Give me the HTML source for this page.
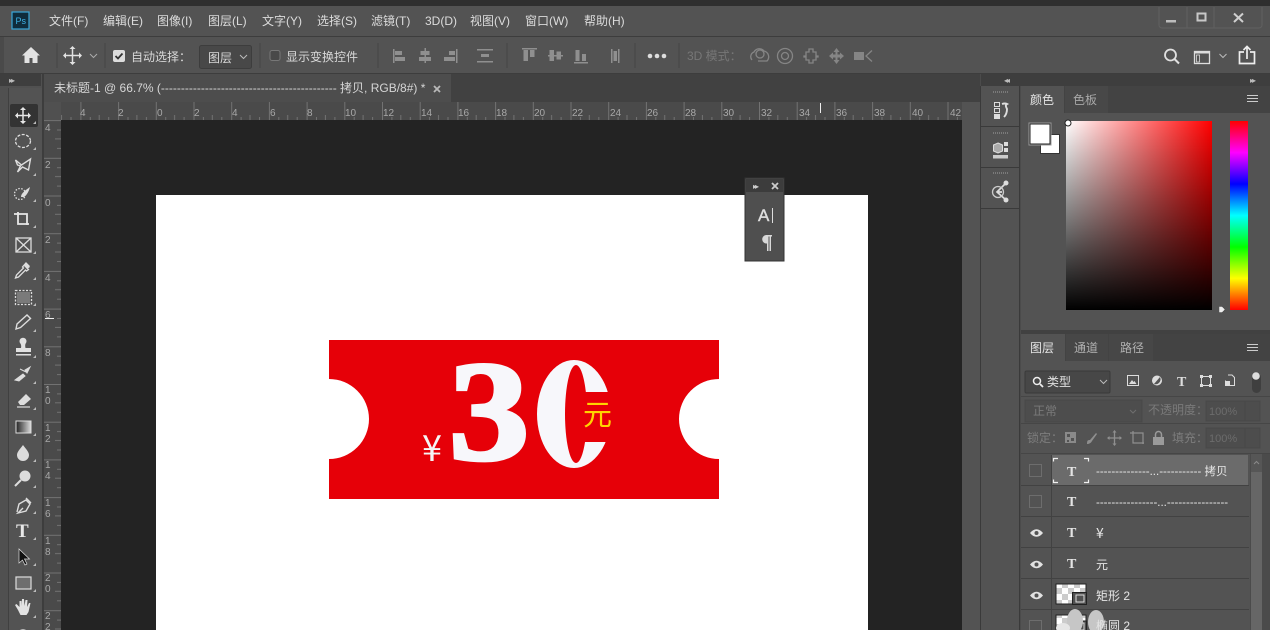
<!DOCTYPE html>
<html lang="zh"><head><meta charset="utf-8"><title>Photoshop</title>
<style>
html,body{margin:0;padding:0;background:#535353;width:1270px;height:630px;overflow:hidden}
svg{display:block;position:absolute;left:0;top:0}
text{font-family:"Liberation Sans","Noto Sans CJK SC",sans-serif;font-size:12px;fill:#d6d6d6}
.m text{font-size:12px;fill:#dcdcdc}
.r text{font-size:10px;fill:#a8a8a8}
.i{fill:none;stroke:#e2e2e2;stroke-width:1.5}
.f{fill:#e2e2e2;stroke:none}
.sep{stroke:#464646;stroke-width:1}
.big{font-family:"Liberation Serif",serif;font-weight:bold;font-size:142px;fill:#f7f7fb;stroke:#f7f7fb;stroke-width:4}
</style></head><body>
<svg width="1270" height="630" viewBox="0 0 1270 630" xmlns="http://www.w3.org/2000/svg">
<defs>
<linearGradient id="wr" x1="0" x2="1" y1="0" y2="0"><stop offset="0" stop-color="#fff"/><stop offset="1" stop-color="#f00"/></linearGradient>
<linearGradient id="bk" x1="0" x2="0" y1="0" y2="1"><stop offset="0" stop-color="#000" stop-opacity="0"/><stop offset="1" stop-color="#000"/></linearGradient>
<linearGradient id="hue" x1="0" x2="0" y1="0" y2="1"><stop offset="0" stop-color="#f00"/><stop offset=".167" stop-color="#f0f"/><stop offset=".333" stop-color="#00f"/><stop offset=".5" stop-color="#0ff"/><stop offset=".667" stop-color="#0f0"/><stop offset=".833" stop-color="#ff0"/><stop offset="1" stop-color="#f00"/></linearGradient>
<linearGradient id="gt" x1="0" x2="1" y1="0" y2="0"><stop offset="0" stop-color="#222"/><stop offset="1" stop-color="#ddd"/></linearGradient>
<pattern id="hr" width="37.7" height="18" patternUnits="userSpaceOnUse" x="5" y="102">
<g stroke="#727272" stroke-width="1"><line x1=".5" y1="0" x2=".5" y2="18"/><line x1="9.9" y1="15" x2="9.9" y2="18"/><line x1="18.8" y1="13" x2="18.8" y2="18"/><line x1="28.3" y1="15" x2="28.3" y2="18"/></g></pattern>
<pattern id="vr" width="17" height="37.7" patternUnits="userSpaceOnUse" x="44" y="7">
<g stroke="#727272" stroke-width="1"><line x1="0" y1=".5" x2="17" y2=".5"/><line x1="13" y1="9.9" x2="17" y2="9.9"/><line x1="11" y1="18.8" x2="17" y2="18.8"/><line x1="13" y1="28.3" x2="17" y2="28.3"/></g></pattern>
<pattern id="ck" width="12" height="12" patternUnits="userSpaceOnUse"><rect width="12" height="12" fill="#fff"/><rect width="6" height="6" fill="#ccc"/><rect x="6" y="6" width="6" height="6" fill="#ccc"/></pattern>
</defs>

<!-- chrome bands -->
<rect width="1270" height="630" fill="#535353"/>
<rect width="1270" height="6" fill="#2f2f2f"/>
<rect y="36" width="1270" height="1" fill="#3d3d3d"/>
<rect y="73" width="1270" height="1" fill="#3d3d3d"/>
<rect x="0" y="37" width="4" height="36" fill="#4a4a4a"/>

<!-- title / menu -->
<rect x="12" y="12" width="17" height="17" fill="#0f2c3c" stroke="#3aa6d8" stroke-width="1.2"/>
<text x="15.500" y="24" style="font-size:9px;fill:#3fb3e8">Ps</text>
<g class="m">
<text x="49" y="25">文件(F)</text><text x="103" y="25">编辑(E)</text><text x="157" y="25">图像(I)</text><text x="208" y="25">图层(L)</text><text x="262" y="25">文字(Y)</text><text x="317" y="25">选择(S)</text><text x="371" y="25">滤镜(T)</text><text x="425" y="25">3D(D)</text><text x="470" y="25">视图(V)</text><text x="525" y="25">窗口(W)</text><text x="584" y="25">帮助(H)</text>
</g>
<!-- window buttons -->
<path d="M1159 7V25a3 3 0 0 0 3 3H1259a3 3 0 0 0 3-3V7M1187 7V28M1214 7V28" fill="none" stroke="#606060"/>
<rect x="1166" y="20" width="10" height="2.500" fill="#bdbdbd"/>
<rect x="1197.500" y="13.500" width="8" height="7" fill="none" stroke="#c8c8c8" stroke-width="2"/>
<path d="M1234 13.500L1243 22M1243 13.500L1234 22" stroke="#d0d0d0" stroke-width="2"/>

<!-- options bar -->
<path d="M31 47l-9 8.500h2.500v7.500h5v-5h3v5h5v-7.500h2.500z" class="f"/>
<line x1="57" y1="43" x2="57" y2="68" class="sep"/><line x1="105" y1="43" x2="105" y2="68" class="sep"/>
<line x1="260" y1="43" x2="260" y2="68" class="sep"/><line x1="378" y1="43" x2="378" y2="68" class="sep"/><line x1="507" y1="43" x2="507" y2="68" class="sep"/><line x1="635" y1="43" x2="635" y2="68" class="sep"/><line x1="679" y1="43" x2="679" y2="68" class="sep"/>
<g>
<path d="M72.500 48v15M65 55.500h15" class="i"/><path d="M72.500 46l-3 3h6zM72.500 65l-3-3h6zM63 55.500l3-3v6zM82 55.500l-3-3v6z" class="f"/>
</g>
<path d="M90 54l3.500 3.500 3.500-3.500" fill="none" stroke="#aaa"/>
<rect x="113" y="50" width="12" height="12" rx="2" fill="#ddd"/><path d="M115.500 56l2.500 2.500 4.500-5" fill="none" stroke="#333" stroke-width="1.800"/>
<text x="131" y="61" style="fill:#d8d8d8">自动选择：</text>
<rect x="199.500" y="45.500" width="52" height="23" rx="2" fill="#484848" stroke="#3d3d3d"/>
<text x="208" y="62" style="fill:#d8d8d8">图层</text><path d="M240 55l3.500 3.500 3.500-3.500" fill="none" stroke="#bbb"/>
<rect x="270" y="50.500" width="10" height="10" rx="2" fill="#494949" stroke="#777"/>
<text x="286" y="61" style="fill:#d8d8d8">显示变换控件</text>
<!-- align group -->
<g fill="#8f8f8f">
<path d="M393 49h1.500v14H393zM395 51h7v4h-7zM395 57h10v4h-10z"/>
<path d="M424.500 48h1.500v15h-1.500zM420.500 51h9v4h-9zM419 57h12v4h-12z"/>
<path d="M456 49h1.500v14H456zM449 51h6v4h-6zM444 57h11v4h-11z"/>
<path d="M477 49h16v1.500h-16zM477 61h16v1.500h-16zM481 54h8v3h-8z"/>
<path d="M522 48h15v1.500h-15zM523.500 50h4.500v11h-4.500zM530 50h4.500v7H530z"/>
<path d="M548 55h15v1.500h-15zM549.500 50h4.500v11h-4.500zM556.500 51.500h4.500v8h-4.500z"/>
<path d="M574 62h14v1.500h-14zM575.500 50h4v11h-4zM582 54h4v7h-4z"/>
<path d="M611 49h1.500v14H611zM618 49h1.500v14H618zM613.500 51h3.500v10h-3.500z"/>
</g>
<circle cx="650" cy="56" r="2.300" fill="#ddd"/><circle cx="657" cy="56" r="2.300" fill="#ddd"/><circle cx="664" cy="56" r="2.300" fill="#ddd"/>
<text x="687" y="60" style="fill:#777">3D 模式：</text>
<g fill="none" stroke="#858585" stroke-width="1.300">
<path d="M752 60a5 5 0 0 1 2-8 6 6 0 0 1 10-1 6 6 0 0 1 3 10h-9"/><circle cx="760" cy="54" r="4"/>
<circle cx="785" cy="56" r="7.500"/><circle cx="785" cy="56" r="3.500"/>
<path d="M806 52h3v-3h4v3h3v4h2v1h-2v3h-3v3h-4v-3h-3v-3h-2v-1h2z"/>
</g>
<path d="M836.500 48l3 4h-2v2.500h2.500v-2l4 3.500-4 3.500v-2h-2.500v2.500h2l-3 4-3-4h2V57.500H833v2l-4-3.500 4-3.500v2h2.500V52h-2z" fill="#858585"/>
<rect x="854" y="52" width="10" height="8" fill="#858585"/><path d="M872 50.500l-6 5.500 6 5.500" fill="none" stroke="#858585" stroke-width="1.300"/>
<!-- right icons -->
<circle cx="1170.500" cy="55" r="5.500" fill="none" stroke="#e0e0e0" stroke-width="1.800"/><path d="M1174.500 59l4.500 4.500" stroke="#e0e0e0" stroke-width="2"/>
<rect x="1194.500" y="51.500" width="15" height="12" fill="none" stroke="#ddd" stroke-width="1.300"/><path d="M1195 51.500h15v2h-15z" fill="#ddd"/><rect x="1196.500" y="55" width="3" height="7" fill="none" stroke="#ddd" stroke-width=".8"/>
<path d="M1219.500 54l3.500 3.500 3.500-3.500" fill="none" stroke="#bbb"/>
<path d="M1244 52h-4.500v11.500h15V52H1250M1247 59V47M1243.500 50l3.500-3.500 3.500 3.500" fill="none" stroke="#eee" stroke-width="1.700"/>

<!-- tab bar & doc -->
<rect x="0" y="74" width="1007" height="28" fill="#414141"/>
<rect x="0" y="74" width="44" height="556" fill="#505050"/>
<rect x="0" y="74" width="41" height="12" fill="#3e3e3e"/>
<text x="9" y="83" style="font-size:8px;fill:#bbb;letter-spacing:-2px">▸▸</text>
<rect x="9" y="88" width="33" height="542" fill="#535353"/>
<rect x="8" y="88" width="1" height="542" fill="#404040"/><rect x="42" y="74" width="2" height="556" fill="#3d3d3d"/>
<rect x="44" y="74" width="407" height="28" fill="#4d4d4d"/>
<text x="54" y="92" style="fill:#d6d6d6">未标题-1 @ 66.7% (-------------------------------------------- 拷贝, RGB/8#) *</text>
<path d="M434 86l6 6M440 86l-6 6" stroke="#b8b8b8" stroke-width="1.800"/>

<!-- rulers -->
<rect x="44" y="102" width="918" height="18" fill="#4a4a4a"/>
<rect x="44" y="102" width="918" height="18" fill="url(#hr)"/>
<rect x="44" y="120" width="17" height="510" fill="#4a4a4a"/>
<rect x="44" y="120" width="17" height="510" fill="url(#vr)"/>
<rect x="44" y="102" width="17" height="18" fill="#505050"/>
<g class="r">
<text x="80" y="116">4</text><text x="118" y="116">2</text><text x="157" y="116">0</text><text x="194" y="116">2</text><text x="232" y="116">4</text><text x="270" y="116">6</text><text x="307" y="116">8</text><text x="345" y="116">10</text><text x="383" y="116">12</text><text x="421" y="116">14</text><text x="458" y="116">16</text><text x="496" y="116">18</text><text x="534" y="116">20</text><text x="572" y="116">22</text><text x="610" y="116">24</text><text x="647" y="116">26</text><text x="685" y="116">28</text><text x="723" y="116">30</text><text x="761" y="116">32</text><text x="799" y="116">34</text><text x="836" y="116">36</text><text x="874" y="116">38</text><text x="912" y="116">40</text><text x="950" y="116">42</text>
<text x="45" y="131">4</text><text x="45" y="168">2</text><text x="45" y="206">0</text><text x="45" y="243">2</text><text x="45" y="281">4</text><text x="45" y="318">6</text><text x="45" y="356">8</text>
<text x="45" y="393">1</text><text x="45" y="404">0</text><text x="45" y="431">1</text><text x="45" y="442">2</text><text x="45" y="468">1</text><text x="45" y="479">4</text><text x="45" y="506">1</text><text x="45" y="517">6</text><text x="45" y="544">1</text><text x="45" y="555">8</text><text x="45" y="581">2</text><text x="45" y="592">0</text><text x="45" y="619">2</text><text x="45" y="630">2</text>
</g>
<rect x="820" y="103" width="1" height="10" fill="#eee"/>
<rect x="45" y="318" width="9" height="1" fill="#eee"/>

<!-- canvas -->
<rect x="61" y="120" width="901" height="510" fill="#232323"/>
<rect x="962" y="102" width="18" height="528" fill="#535353"/>
<rect x="156" y="195" width="712" height="435" fill="#fff"/>
<path d="M329 340H719V379A40 40 0 0 0 719 459V499H329V459A40 40 0 0 0 329 379Z" fill="#e60008"/>
<text class="big" transform="translate(449,459) scale(1.13,1)">3</text>
<text class="big" transform="translate(541,459) scale(.95,.96)">0</text>
<ellipse cx="574" cy="414" rx="37" ry="54" fill="#f7f7fb"/>
<ellipse cx="576" cy="414" rx="11" ry="49" fill="#e60008"/>
<path d="M583 392H615V442H583Z" fill="#e60008"/>
<text x="422" y="461" style="font-size:36px;fill:#f5f5f5;font-family:'Noto Sans CJK SC',sans-serif;font-weight:400">¥</text>
<text x="583" y="425" style="font-size:29px;fill:#ffd400;font-family:'Noto Sans CJK SC',sans-serif;font-weight:400">元</text>

<!-- floating mini panel -->
<rect x="745" y="178" width="39" height="83" fill="#4f4f4f" stroke="#333"/>
<rect x="746" y="179" width="37" height="13" fill="#3c3c3c"/>
<text x="753" y="189" style="font-size:8px;fill:#ccc;letter-spacing:-2px">▸▸</text>
<path d="M772 183l6 6M778 183l-6 6" stroke="#ccc" stroke-width="1.800"/>
<text x="758" y="221" style="font-size:17px;fill:#dedede;stroke:#dedede;stroke-width:.4">A</text><rect x="772" y="208" width="1" height="15" fill="#ddd"/>
<path d="M766 235h6v1.500h-1v14.500h-1.500v-14.500h-1V251H767v-7.500a4.200 4.200 0 0 1-1-8.500z" fill="#d8d8d8"/>

<!-- tool icons -->
<rect x="10" y="104" width="28" height="23" rx="2" fill="#333"/>
<g>
<path d="M23 109v13M16.500 115.500h13" stroke="#e6e6e6" stroke-width="1.500"/><path d="M23 107l-3 3h6zM23 124l-3-3h6zM15 115.500l3-3v6zM31 115.500l-3-3v6z" fill="#e6e6e6"/>
<ellipse cx="23" cy="141" rx="7.500" ry="6.500" fill="none" stroke="#ddd" stroke-width="1.300" stroke-dasharray="3 1.500"/>
<path d="M15.500 160l6 5 9-6-2 11-6-3-5 5 3-6-3-1z" fill="none" stroke="#ddd" stroke-width="1.400"/>
<circle cx="20" cy="194" r="5.500" fill="none" stroke="#ddd" stroke-width="1.300" stroke-dasharray="1.500 1.500"/><path d="M21 197c0-4 5-7 9-10-1 4-3 8-6 10z" fill="#ddd"/>
<path d="M14 214h4v-2M18 212v12h11M18 214h9v11" fill="none" stroke="#e6e6e6" stroke-width="1.800"/>
<rect x="16" y="238" width="15" height="14" fill="none" stroke="#ddd" stroke-width="1.300"/><path d="M16 238l15 14M31 238l-15 14" stroke="#ddd" stroke-width="1.300"/>
<path d="M26 263l3 3-2 2 1.500 1.500-2 1.500-1-1-7 7-3 1 1-3 7-7-1-1z" fill="none" stroke="#ddd" stroke-width="1.300"/><path d="M26 263l4 4-3 2-3-3z" fill="#ddd"/>
<rect x="17" y="292" width="13" height="11" fill="#7a7a7a"/><rect x="15.500" y="290.500" width="16" height="14" fill="none" stroke="#ddd" stroke-width="1.300" stroke-dasharray="2 1.500"/>
<path d="M16 329l1-5 10-9 3.500 3.500-10 9z" fill="none" stroke="#ddd" stroke-width="1.400"/>
<path d="M20 343a3.500 3.500 0 1 1 6 0c-1 1-1 3-.5 5H31v4H16v-4h5c.5-2 0-4-1-5z" fill="#e0e0e0"/><rect x="16" y="354" width="15" height="1.500" fill="#ddd"/>
<path d="M15 380l8-6 2 2-6 5zM25 370l5-3-3 6zM20 369l6 3" fill="#ddd" stroke="#ddd" stroke-width="1"/>
<path d="M18 402l8-8 5 5-7 6h-4z" fill="#ddd"/><path d="M17 407h13" stroke="#ddd" stroke-width="1.200"/>
<rect x="16" y="421" width="15" height="12" fill="url(#gt)" stroke="#ddd"/>
<path d="M23 445c3 4 6 7 6 10a6 6 0 0 1-12 0c0-3 3-6 6-10z" fill="#dcdcdc"/>
<circle cx="25" cy="476" r="5.500" fill="#dcdcdc"/><path d="M21 480l-6 6" stroke="#dcdcdc" stroke-width="2"/>
<path d="M17 512l2-8 7-4 4 4-4 7-8 2 5-5M26 498l5 5" fill="none" stroke="#ddd" stroke-width="1.400"/>
<text x="16" y="537" style="font-family:'Liberation Serif',serif;font-size:19px;fill:#e8e8e8;font-weight:bold">T</text>
<path d="M19 549v14l3.500-3 2.500 5 2-1-2.500-5h5z" fill="#111" stroke="#ddd" stroke-width=".7"/>
<rect x="16" y="577" width="15" height="12" fill="#6e6e6e" stroke="#ddd" stroke-width="1.200"/>
<path d="M18 610l-3-5 1.500-1 3 3v-6h2v5l.5-7h2l.5 7 1-6h2l-.5 7 2-4h1.500l-2 9-2 3h-6z" fill="#e2e2e2"/>
<circle cx="23" cy="636" r="6" fill="none" stroke="#ddd" stroke-width="1.500"/>
</g>
<g fill="#bbb"><path d="M36 121v3h-3zM36 147v3h-3zM36 173v3h-3zM36 199v3h-3zM36 225v3h-3zM36 251v3h-3zM36 277v3h-3zM36 303v3h-3zM36 329v3h-3zM36 355v3h-3zM36 381v3h-3zM36 407v3h-3zM36 433v3h-3zM36 459v3h-3zM36 485v3h-3zM36 511v3h-3zM36 537v3h-3zM36 563v3h-3zM36 589v3h-3zM36 615v3h-3z"/></g>

<!-- right dock -->
<rect x="980" y="74" width="290" height="556" fill="#4b4b4b"/>
<rect x="980" y="86" width="1" height="544" fill="#3a3a3a"/>
<rect x="981" y="74" width="289" height="12" fill="#3e3e3e"/>
<text x="1004" y="83" style="font-size:8px;fill:#bbb;letter-spacing:-2px">◂◂</text>
<text x="1250" y="83" style="font-size:8px;fill:#bbb;letter-spacing:-2px">▸▸</text>
<rect x="981" y="86" width="38" height="544" fill="#535353"/>
<rect x="1019" y="86" width="1" height="544" fill="#3a3a3a"/>
<path d="M981 126.500h38M981 167.500h38M981 208.500h38" stroke="#3a3a3a"/>
<path d="M993 92h16M993 133h16M993 173h16" stroke="#7a7a7a" stroke-width="2" stroke-dasharray="1 1"/>
<rect x="994.500" y="102.500" width="5" height="4" fill="none" stroke="#ddd"/><rect x="994.500" y="108.500" width="5" height="4" fill="none" stroke="#ddd"/><rect x="994" y="114" width="6" height="5" fill="#ddd"/>
<path d="M1002 104c3-1 5 0 5 0-2 1-1 3 0 5 0 3-1 6-3 8" fill="none" stroke="#ddd" stroke-width="1.900"/>
<path d="M998 143l4.500 2v6l-4.500 2-4.500-2v-6z" fill="#aaa" stroke="#ddd"/><rect x="1004" y="142" width="4" height="4" fill="#ddd"/><rect x="1004" y="148" width="4" height="4" fill="#ddd"/><rect x="993" y="155" width="15" height="3.500" fill="#ccc"/>
<path d="M1006 183l-9 9 9 8M998 192h4" fill="none" stroke="#ddd" stroke-width="1.700"/><circle cx="998" cy="192" r="5.500" fill="none" stroke="#ccc" stroke-width="1.300"/><circle cx="1006" cy="183" r="2.500" fill="#ddd"/><circle cx="1006" cy="200" r="2.500" fill="#ddd"/>

<!-- color panel -->
<rect x="1021" y="86" width="249" height="244" fill="#535353"/>
<rect x="1021" y="86" width="249" height="27" fill="#434343"/>
<rect x="1021" y="86" width="43" height="27" fill="#535353"/>
<rect x="1065" y="86" width="43" height="27" fill="#484848"/>
<text x="1030" y="104" style="fill:#e4e4e4">颜色</text><text x="1073" y="104" style="fill:#a8a8a8">色板</text>
<path d="M1247 95.500h11M1247 98.500h11M1247 101.500h11" stroke="#ccc"/>
<rect x="1040.500" y="134.500" width="19" height="19" fill="#fff" stroke="#333"/>
<rect x="1030" y="124" width="20" height="20" fill="#fff" stroke="#222" stroke-width="1"/><rect x="1029" y="123" width="22" height="22" fill="none" stroke="#999"/>
<rect x="1066" y="121" width="146" height="189" fill="url(#wr)"/><rect x="1066" y="121" width="146" height="189" fill="url(#bk)"/>
<circle cx="1068" cy="123" r="3" fill="#fff" stroke="#222"/>
<rect x="1230" y="121" width="18" height="189" fill="url(#hue)"/>
<path d="M1219 306.500h3l3 3-3 3h-3z" fill="#eee" stroke="#555" stroke-width=".5"/>

<!-- layers panel -->
<rect x="1021" y="330" width="249" height="4" fill="#414141"/>
<rect x="1021" y="334" width="249" height="296" fill="#535353"/>
<rect x="1021" y="334" width="249" height="27" fill="#434343"/>
<rect x="1021" y="334" width="44" height="27" fill="#535353"/>
<rect x="1066" y="334" width="42" height="27" fill="#474747"/><rect x="1109" y="334" width="44" height="27" fill="#474747"/>
<text x="1030" y="352" style="fill:#e4e4e4">图层</text><text x="1074" y="352" style="fill:#b0b0b0">通道</text><text x="1120" y="352" style="fill:#b0b0b0">路径</text>
<path d="M1247 344.500h11M1247 347.500h11M1247 350.500h11" stroke="#ccc"/>
<rect x="1025" y="371" width="85" height="22" rx="1.500" fill="#474747" stroke="#3a3a3a"/>
<circle cx="1037" cy="381" r="3.500" fill="none" stroke="#eee" stroke-width="1.500"/><path d="M1040 384l3 3" stroke="#eee" stroke-width="1.800"/>
<text x="1047" y="386" style="fill:#e0e0e0">类型</text><path d="M1100 380l3.500 3.500 3.500-3.500" fill="none" stroke="#bbb"/>
<rect x="1127.500" y="375.500" width="11" height="10" fill="none" stroke="#ddd"/><path d="M1129 384l3-4 1.500 2 1-1 2 3z" fill="#ddd"/>
<circle cx="1157" cy="380.500" r="5" fill="#ddd"/><path d="M1160 377a5 5 0 0 1-6 7z" fill="#555"/>
<text x="1177" y="386" style="font-family:'Liberation Serif',serif;font-size:14px;font-weight:bold;fill:#ddd">T</text>
<rect x="1201.500" y="376.500" width="9" height="9" fill="none" stroke="#ddd"/><path d="M1200 375h3v3h-3zM1209 375h3v3h-3zM1200 384h3v3h-3zM1209 384h3v3h-3z" fill="#ddd"/>
<path d="M1228 375h4l2.500 2.500v8h-9v-5" fill="none" stroke="#ddd"/><rect x="1225" y="381" width="5" height="5" fill="#ddd"/>
<rect x="1252" y="373" width="9" height="20" rx="4.500" fill="#3f3f3f"/><circle cx="1256" cy="376" r="3.800" fill="#ddd"/>
<path d="M1021 396.500h249M1021 423.500h249M1021 453.500h249" stroke="#464646"/>
<rect x="1025" y="400" width="117" height="22" fill="#4d4d4d" stroke="#484848"/>
<text x="1033" y="415" style="fill:#7a7a7a">正常</text><path d="M1130 410l3 3 3-3" fill="none" stroke="#6f6f6f"/>
<text x="1148" y="414" style="fill:#7a7a7a">不透明度：</text>
<rect x="1206" y="401" width="54" height="20" fill="#4d4d4d" stroke="#484848"/><text x="1209" y="415" style="font-size:11px;fill:#6c6c6c">100%</text><path d="M1245 401v20" stroke="#484848"/>
<text x="1027" y="442" style="fill:#7d7d7d">锁定：</text>
<rect x="1065" y="432" width="11" height="11" fill="#8a8a8a"/><path d="M1067 434h3v3h-3zM1071 438h3v3h-3zM1067 440h2v2h-2z" fill="#535353"/>
<path d="M1087 444c0-4 1-4 3-4l6-7 1 1-5 7c-1 2-3 3-5 3z" fill="#8f8f8f"/>
<path d="M1114.500 431v14M1108 438h13" stroke="#8f8f8f" stroke-width="1.300"/><path d="M1114.500 430l-2 2.500h4zM1114.500 446l-2-2.500h4zM1107 438l2.500-2v4zM1122 438l-2.500-2v4z" fill="#8f8f8f"/>
<path d="M1130 433h13v11M1133 431v12h11" fill="none" stroke="#8f8f8f" stroke-width="1.200"/>
<rect x="1153" y="437" width="11" height="8" fill="#9a9a9a"/><path d="M1155.500 437v-2.500a3 3 0 0 1 6 0V437" fill="none" stroke="#9a9a9a" stroke-width="1.500"/>
<text x="1172" y="442" style="fill:#7d7d7d">填充：</text>
<rect x="1206" y="428" width="54" height="20" fill="#4d4d4d" stroke="#484848"/><text x="1209" y="442" style="font-size:11px;fill:#6c6c6c">100%</text><path d="M1245 428v20" stroke="#484848"/>

<!-- layer rows -->
<rect x="1051" y="455" width="197" height="30" fill="#6b6b6b"/>
<g stroke="#424242"><path d="M1021 485.500h228M1021 516.500h228M1021 547.500h228M1021 578.500h228M1021 609.500h228"/><path d="M1051.500 455v175"/></g>
<rect x="1250" y="454" width="20" height="176" fill="#4b4b4b"/>
<rect x="1251" y="454" width="11" height="176" fill="#666"/><rect x="1251" y="454" width="11" height="18" fill="#565656"/><path d="M1254 464l2.500-2.500 2.500 2.500" fill="none" stroke="#8a8a8a"/>
<rect x="1029.500" y="464.500" width="12" height="12" fill="none" stroke="#6d6d6d"/><rect x="1029.500" y="495.500" width="12" height="12" fill="none" stroke="#6d6d6d"/><rect x="1029.500" y="620.500" width="12" height="12" fill="none" stroke="#6d6d6d"/>
<path d="M1058 458.500h-4.500v3M1084 458.500h4.500v3M1058 482.500h-4.500v-3M1084 482.500h4.500v-3" fill="none" stroke="#f0f0f0" stroke-width="1.200"/>
<text x="1067" y="476" style="font-family:'Liberation Serif',serif;font-size:14px;font-weight:bold;fill:#e4e4e4">T</text>
<text x="1067" y="506" style="font-family:'Liberation Serif',serif;font-size:14px;font-weight:bold;fill:#e4e4e4">T</text>
<text x="1067" y="537" style="font-family:'Liberation Serif',serif;font-size:14px;font-weight:bold;fill:#e4e4e4">T</text>
<text x="1067" y="568" style="font-family:'Liberation Serif',serif;font-size:14px;font-weight:bold;fill:#e4e4e4">T</text>
<text x="1096" y="475" style="font-size:11.500px;fill:#e6e6e6">--------------...----------- 拷贝</text>
<text x="1096" y="506" style="font-size:11.500px;fill:#e6e6e6">----------------...----------------</text>
<text x="1096" y="538" style="font-size:14px;fill:#e6e6e6;font-family:'Noto Sans CJK SC',sans-serif">¥</text>
<text x="1096" y="569" style="fill:#e6e6e6">元</text>
<text x="1096" y="600" style="fill:#e6e6e6">矩形 2</text>
<g fill="#e2e2e2">
<path d="M1030 533c4-5 9-5 13 0-4 5-9 5-13 0z"/><circle cx="1036.500" cy="533" r="2" fill="#535353"/>
<path d="M1030 564.500c4-5 9-5 13 0-4 5-9 5-13 0z"/><circle cx="1036.500" cy="564.500" r="2" fill="#535353"/>
<path d="M1030 595.500c4-5 9-5 13 0-4 5-9 5-13 0z"/><circle cx="1036.500" cy="595.500" r="2" fill="#535353"/>
</g>
<rect x="1056" y="584" width="30" height="20" fill="url(#ck)" stroke="#222"/>
<rect x="1072.500" y="592.500" width="14" height="12" fill="#505050" stroke="#222"/><rect x="1076" y="595" width="8" height="7" fill="none" stroke="#ddd"/>
<rect x="1056" y="615" width="30" height="20" fill="url(#ck)" stroke="#222"/>
<rect x="1072.500" y="621" width="14" height="12" fill="#505050" stroke="#222"/><rect x="1076" y="623" width="8" height="7" fill="none" stroke="#ddd"/>
<ellipse cx="1075" cy="621" rx="8" ry="12" fill="#c6c6c6"/><ellipse cx="1096" cy="622" rx="8" ry="12" fill="#c6c6c6"/>
<ellipse cx="1063" cy="628" rx="7" ry="5" fill="#e6e6e6"/>
<text x="1096" y="630" style="fill:#e6e6e6">椭圆 2</text>
</svg>
</body></html>
